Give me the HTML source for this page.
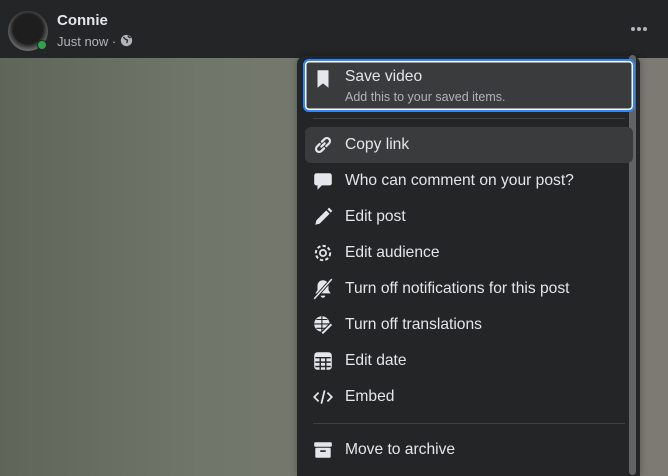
<!DOCTYPE html>
<html><head><style>
*{margin:0;padding:0;box-sizing:border-box}
body{width:668px;height:464px;overflow:hidden;position:relative;font-family:"Liberation Sans",sans-serif;background:linear-gradient(90deg,#5f6659 0%,#70766a 30%,#7a7b70 60%,#7c7a72 100%)}
.hdr{position:absolute;left:0;top:0;width:668px;height:58px;background:#242526}
.av{position:absolute;left:8px;top:11px;width:40px;height:40px;border-radius:50%;background:radial-gradient(circle at 50% 45%,#1e1e1e 50%,#777 75%,#aaa 85%,#444 100%)}
.dot{position:absolute;left:37px;top:40px;width:10px;height:10px;border-radius:50%;background:#31a24c;border:1.5px solid #242526}
.name{position:absolute;left:57px;top:12px;color:#e4e6eb;font-size:15px;font-weight:bold}
.sub{position:absolute;left:57px;top:34px;color:#b0b3b8;font-size:13px}
.dots{position:absolute;left:631px;top:27px}
.dots i{display:inline-block;width:4px;height:4px;border-radius:50%;background:#b0b3b8;margin-right:2px;vertical-align:top}
.menu{position:absolute;left:297px;top:56px;width:343px;height:420px;background:#242526;border-radius:8px 8px 0 0;box-shadow:0 0 8px rgba(0,0,0,.3)}
.sb{position:absolute;left:629px;top:55px;width:7px;height:420px;background:#626365;border-radius:4px}
.save{position:absolute;left:303px;top:59px;width:332px;height:53px;border:2px solid #2d88ff;border-radius:6px;background:#3a3b3c;box-shadow:inset 0 0 0 1.5px #fff}
.it{position:absolute;left:305px;width:328px;height:36px;color:#e4e6eb;font-size:15.6px;line-height:36px;padding-left:40px;border-radius:6px}
.it svg{position:absolute;left:7px;top:7px;width:22px;height:22px}
.sep{position:absolute;left:313px;width:312px;height:1px;background:#3e4042}
</style></head><body>
<div class="hdr"></div>
<div class="av"></div><div class="dot"></div>
<div class="name">Connie</div>
<div class="sub">Just now · <svg width="13" height="13" viewBox="0 0 16 16" style="vertical-align:-1px"><circle cx="8" cy="8" r="7" fill="#b0b3b8"/><path d="M4 4c2 1 2 3 4 3s1 3 0 4M10 2c0 2 2 2 3 3" stroke="#242526" stroke-width="1.6" fill="none"/></svg></div>
<div class="dots"><i></i><i></i><i></i></div>
<div class="menu"></div>
<div class="sb"></div>
<div class="save"></div>
<div class="it" style="top:59px;line-height:normal;padding-top:9px">Save video<div style="font-size:12.5px;color:#b0b3b8;margin-top:4px">Add this to your saved items.</div>
<svg viewBox="0 0 20 20" style="top:9px"><path d="M5 2h10v16l-5-4-5 4z" fill="#e4e6eb"/></svg></div>
<div class="sep" style="top:118px"></div>
<div class="it" style="top:127px;background:#3a3b3c">Copy link<svg viewBox="0 0 20 20"><path d="M8.5 11.5l3-3M7 9l-2.5 2.5a2.8 2.8 0 004 4L11 13M13 11l2.5-2.5a2.8 2.8 0 00-4-4L9 7" stroke="#e4e6eb" stroke-width="2" fill="none" stroke-linecap="round"/></svg></div>
<div class="it" style="top:163px">Who can comment on your post?<svg viewBox="0 0 20 20"><path d="M4 3h12a2 2 0 012 2v7a2 2 0 01-2 2H9l-4 4v-4H4a2 2 0 01-2-2V5a2 2 0 012-2z" fill="#e4e6eb"/></svg></div>
<div class="it" style="top:199px">Edit post<svg viewBox="0 0 20 20"><path d="M3 17l1-4 9-9 3 3-9 9zM14 3l1.5-1.5 3 3L17 6z" fill="#e4e6eb"/></svg></div>
<div class="it" style="top:235px">Edit audience<svg viewBox="0 0 20 20"><circle cx="10" cy="10" r="6.5" stroke="#e4e6eb" stroke-width="1.8" fill="none" stroke-dasharray="3 2"/><circle cx="10" cy="10" r="2.8" stroke="#e4e6eb" stroke-width="1.6" fill="none"/></svg></div>
<div class="it" style="top:271px">Turn off notifications for this post<svg viewBox="0 0 20 20"><path d="M10 2a5 5 0 015 5v4l2 3H3l2-3V7a5 5 0 015-5zM8 16h4a2 2 0 01-4 0z" fill="#e4e6eb"/><path d="M2 19L18 1" stroke="#242526" stroke-width="3"/><path d="M2 19L18 1" stroke="#e4e6eb" stroke-width="1.4"/></svg></div>
<div class="it" style="top:307px">Turn off translations<svg viewBox="0 0 20 20"><circle cx="9" cy="9" r="7" fill="#e4e6eb"/><path d="M2 9h14M9 2v14M4 5h10M4 13h10" stroke="#242526" stroke-width="1"/><path d="M8 17l9-9 2 2-9 9z" fill="#e4e6eb" stroke="#242526" stroke-width="1"/></svg></div>
<div class="it" style="top:343px">Edit date<svg viewBox="0 0 20 20"><rect x="2" y="2" width="16" height="16" rx="3" fill="#e4e6eb"/><path d="M3 7h14M3 11h14M3 15h14M7.5 7v11M12.5 7v11" stroke="#242526" stroke-width="1.3"/></svg></div>
<div class="it" style="top:379px">Embed<svg viewBox="0 0 20 20"><path d="M6 6l-4 4 4 4M14 6l4 4-4 4M11.5 4l-3 12" stroke="#e4e6eb" stroke-width="1.6" fill="none"/></svg></div>
<div class="sep" style="top:423px"></div>
<div class="it" style="top:432px">Move to archive<svg viewBox="0 0 20 20"><rect x="2" y="3" width="16" height="4" rx="1" fill="#e4e6eb"/><rect x="3" y="8" width="14" height="9" rx="1" fill="#e4e6eb"/><path d="M7.5 11h5" stroke="#242526" stroke-width="1.5"/></svg></div>
</body></html>
